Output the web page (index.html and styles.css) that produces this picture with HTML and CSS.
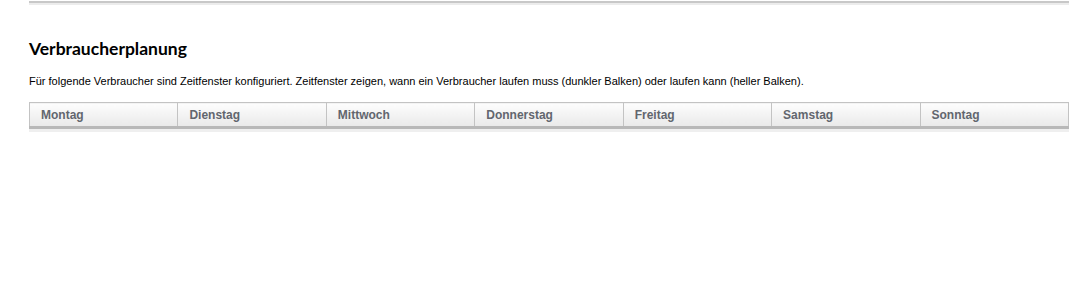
FILE: index.html
```html
<!DOCTYPE html>
<html lang="de">
<head>
    <meta charset="UTF-8">
    <title>Verbraucherplanung</title>
    <link rel="stylesheet" href="styles.css">
</head>
<body>
    <div class="seite">
        <div class="trenner"></div>

        <h2 class="titel">Verbraucherplanung</h2>
        <p class="hinweis">Für folgende Verbraucher sind Zeitfenster konfiguriert. Zeitfenster zeigen, wann ein Verbraucher laufen muss (dunkler Balken) oder laufen kann (heller Balken).</p>

        <table class="wochenplan">
            <thead>
                <tr>
                    <th>Montag</th>
                    <th>Dienstag</th>
                    <th>Mittwoch</th>
                    <th>Donnerstag</th>
                    <th>Freitag</th>
                    <th>Samstag</th>
                    <th>Sonntag</th>
                </tr>
            </thead>
        </table>
        <div class="tabellenfuss"></div>
    </div>
</body>
</html>
```

FILE: styles.css
```css
/* Grundlayout */
body, html {
    margin: 0;
    padding: 0;
    background: #fff;
}

body {
    font-family: "Liberation Sans", Arial, sans-serif;
    font-size: 11px;
    color: #000;
}

.seite {
    width: 1040px;
    margin-left: 29px;
}

/* Linie oben */
.trenner {
    height: 2px;
    margin-top: 1px;
    background: #c8c8c8;
    border-bottom: 2px solid #ececec;
}

/* Überschrift */
.titel {
    margin: 34px 0 0 0;
    font-family: Lato, "DejaVu Sans", sans-serif;
    font-size: 17.5px;
    font-weight: bold;
    line-height: 20px;
}

.hinweis {
    margin: 15px 0 0 0;
    line-height: 14px;
}

/* Tabelle mit Wochentagen */
.wochenplan {
    width: 100%;
    margin-top: 14px;
    border-collapse: collapse;
    table-layout: fixed;
}

.wochenplan th {
    height: 23px;
    padding: 0 0 0 11px;
    text-align: left;
    font-weight: bold;
    font-size: 12px;
    color: #62666e;
    background: linear-gradient(#fdfdfd, #e9e9e9);
    border: 1px solid #c3c3c3;
    border-bottom: 3px solid #b8b8b8;
}

.tabellenfuss {
    height: 3px;
    background: #efefef;
}
```
